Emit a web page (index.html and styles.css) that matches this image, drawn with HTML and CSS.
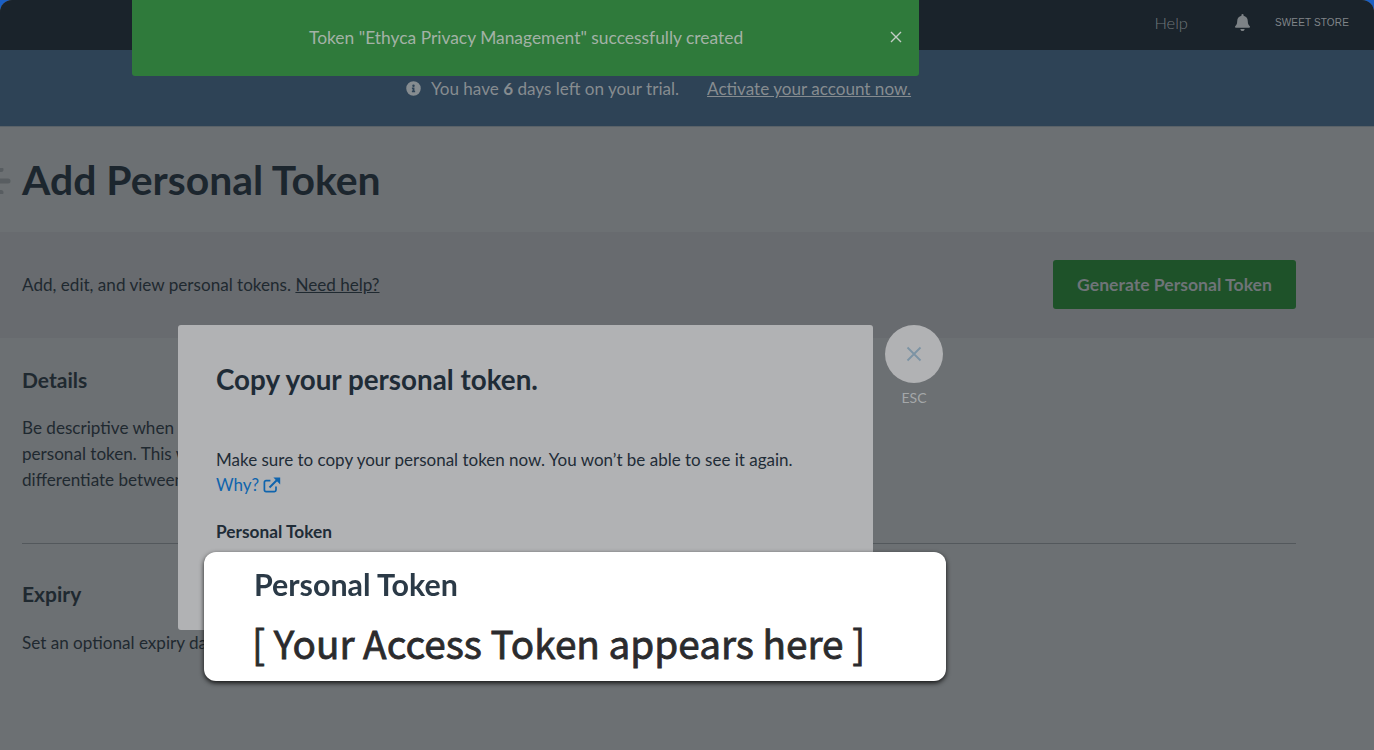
FILE: index.html
```html
<!DOCTYPE html>
<html lang="en">
<head>
    <meta charset="UTF-8">
    <meta name="viewport" content="width=device-width, initial-scale=1.0">
    <title>Add Personal Token</title>
    <link rel="stylesheet" href="styles.css">
</head>
<body>
    <div class="page">
        <header class="topbar">
            <span class="help">Help</span>
            <svg class="bell" viewBox="0 0 448 512" width="15" height="17"><path fill="currentColor" d="M224 512c35 0 64-29 64-64H160c0 35 29 64 64 64zm215-150c-19-21-56-52-56-154 0-78-54-140-127-155V32a32 32 0 1 0-64 0v21C119 68 65 130 65 208c0 102-37 133-56 154-6 6-9 14-9 22 0 16 13 32 32 32h384c19 0 32-16 32-32 0-8-3-16-9-22z"/></svg>
            <span class="store">SWEET STORE</span>
        </header>

        <div class="trial">
            <svg class="info" viewBox="0 0 512 512" width="15" height="15"><path fill="currentColor" d="M256 8a248 248 0 1 0 0 496 248 248 0 0 0 0-496zm0 110a42 42 0 1 1 0 84 42 42 0 0 1 0-84zm56 254c0 7-5 12-12 12h-88c-7 0-12-5-12-12v-24c0-7 5-12 12-12h12v-64h-12c-7 0-12-5-12-12v-24c0-7 5-12 12-12h64c7 0 12 5 12 12v100h12c7 0 12 5 12 12z"/></svg>
            <span>You have <b>6</b> days left on your trial.</span>
            <a class="activate">Activate your account now.</a>
        </div>

        <div class="title-band">
            <svg class="back-icon" viewBox="0 0 12 26" width="12" height="26"><path d="M0 13h8" stroke="currentColor" stroke-width="5" stroke-linecap="round" fill="none"/><path d="M0 1.5h1M0 24.5h1" stroke="currentColor" stroke-width="5" stroke-linecap="round" fill="none"/></svg>
            <h1>Add Personal Token</h1>
        </div>

        <div class="intro-band">
            <p>Add, edit, and view personal tokens. <a class="need-help">Need help?</a></p>
            <button class="btn-generate">Generate Personal Token</button>
        </div>

        <div class="form-area">
            <section class="form-section first">
                <h2>Details</h2>
                <p>Be descriptive when<br>personal token. This w<br>differentiate between</p>
            </section>
            <section class="form-section">
                <h2>Expiry</h2>
                <p>Set an optional expiry date</p>
            </section>
        </div>
    </div>

    <div class="toast">
        <span>Token "Ethyca Privacy Management" successfully created</span>
        <svg class="toast-close" viewBox="0 0 12 12" width="12" height="12"><path d="M1 1l10 10M11 1L1 11" stroke="currentColor" stroke-width="1.4" fill="none"/></svg>
    </div>

    <div class="modal">
        <h3>Copy your personal token.</h3>
        <p class="modal-text">Make sure to copy your personal token now. You won’t be able to see it again.</p>
        <a class="why">Why?
            <svg viewBox="0 0 18 16" width="18" height="16"><path d="M13 9.5V13a1.6 1.6 0 0 1-1.6 1.6H3A1.6 1.6 0 0 1 1.4 13V5.2A1.6 1.6 0 0 1 3 3.6h4.4" stroke="currentColor" stroke-width="1.7" fill="none"/><path d="M6.5 10.5L14 3" stroke="currentColor" stroke-width="1.9" fill="none"/><path d="M10.4 0.6h6.8v6.8z" fill="currentColor"/></svg>
        </a>
        <h4>Personal Token</h4>
    </div>

    <div class="modal-close">
        <span class="close-circle">
            <svg viewBox="0 0 16 16" width="16" height="16"><path d="M1.5 1.5l13 13M14.5 1.5l-13 13" stroke="currentColor" stroke-width="1.8" fill="none"/></svg>
        </span>
        <span class="esc">ESC</span>
    </div>

    <div class="callout">
        <div class="callout-label">Personal Token</div>
        <div class="callout-token">[ Your Access Token appears here ]</div>
    </div>
</body>
</html>
```

FILE: styles.css
```css
html, body {
    height: 100%;
}

body {
    font-family: 'Lato', sans-serif;
    margin: 0;
    background-color: #1a5fc4;
    color: #1f2930;
    overflow: hidden;
    position: relative;
}

.page {
    height: 750px;
    display: flex;
    flex-direction: column;
    background-color: #6c7073;
    border-radius: 12px 12px 0 0;
    overflow: hidden;
}

.topbar {
    height: 50px;
    flex: none;
    display: flex;
    justify-content: flex-end;
    align-items: center;
    background-color: #1a232b;
    color: #6f7579;
    padding: 0 25px 5px 0;
    box-sizing: border-box;
}

.help {
    font-size: 16.5px;
    font-weight: 300;
    margin-right: 47px;
}

.bell {
    margin-right: 25px;
    color: #7d8286;
}

.store {
    font-family: 'Liberation Sans', sans-serif;
    font-size: 10px;
    letter-spacing: 0.15px;
    color: #808589;
}

.trial {
    height: 77px;
    flex: none;
    display: flex;
    justify-content: center;
    align-items: center;
    box-sizing: border-box;
    padding: 0 57px 0 0;
    background-color: #2e4356;
    color: #868c90;
    font-size: 17.1px;
    border-bottom: 1px solid #5a6268;
}

.info {
    margin-right: 10px;
}

.activate {
    margin-left: 28px;
    text-decoration: underline;
}

.title-band {
    height: 105px;
    flex: none;
    display: flex;
    align-items: center;
    padding-left: 22px;
    position: relative;
    background-color: #6c7073;
}

.back-icon {
    position: absolute;
    left: 0;
    top: 41px;
    color: #585d61;
}

h1 {
    margin: 0;
    font-size: 40.9px;
    font-weight: 700;
    color: #1c262e;
}

.intro-band {
    height: 106px;
    flex: none;
    display: flex;
    justify-content: space-between;
    align-items: center;
    padding: 0 78px 2px 22px;
    box-sizing: border-box;
    background-color: #686b6f;
    font-size: 17.1px;
}

.intro-band p {
    margin: 0;
}

.need-help {
    text-decoration: underline;
}

.btn-generate {
    width: 243px;
    height: 49px;
    border: none;
    border-radius: 3px;
    background-color: #1e5229;
    color: #6f7478;
    font-family: 'Lato', sans-serif;
    font-size: 17.6px;
    font-weight: 700;
}

.form-area {
    flex: 1;
    padding: 0 78px 0 22px;
    background-color: #6c7073;
}

.form-section {
    font-size: 17.1px;
    line-height: 26px;
}

.form-section.first {
    padding: 27px 0 50px;
    border-bottom: 1px solid #53585c;
}

.form-section h2 {
    margin: 0;
    font-size: 21px;
    font-weight: 700;
    line-height: 30px;
}

.form-section p {
    margin: 20px 0 0;
}

.form-section:not(.first) {
    padding-top: 35px;
}

.form-section:not(.first) p {
    margin-top: 21px;
}

.toast {
    position: absolute;
    left: 132px;
    top: 0;
    width: 787px;
    height: 76px;
    box-sizing: border-box;
    padding: 0 17px 2px 177px;
    display: flex;
    justify-content: space-between;
    align-items: center;
    background-color: #2f7a3b;
    border-radius: 0 0 3px 3px;
    color: #a3b2a6;
    font-size: 17.4px;
}

.toast-close {
    color: #c3cdc5;
}

.modal {
    position: absolute;
    left: 178px;
    top: 325px;
    width: 695px;
    height: 305px;
    box-sizing: border-box;
    padding: 38px 38px;
    background-color: #b1b2b4;
    border-radius: 3px;
    color: #1f2c37;
}

.modal h3 {
    margin: 0;
    font-size: 27.8px;
    line-height: 34px;
    font-weight: 700;
}

.modal-text {
    margin: 50px 0 0;
    font-size: 17px;
    line-height: 25px;
}

.why {
    display: flex;
    align-items: center;
    gap: 4px;
    font-size: 17px;
    line-height: 25px;
    color: #0f64ad;
}

.modal h4 {
    margin: 22px 0 0;
    font-size: 17.3px;
    line-height: 25px;
    font-weight: 700;
}

.modal-close {
    position: absolute;
    left: 885px;
    top: 325px;
    width: 58px;
    display: flex;
    flex-direction: column;
    align-items: center;
    gap: 6px;
}

.close-circle {
    width: 58px;
    height: 58px;
    border-radius: 50%;
    display: flex;
    justify-content: center;
    align-items: center;
    background-color: #b1b2b4;
    color: #7c93a4;
}

.esc {
    font-size: 14px;
    line-height: 17px;
    color: #a4a7a9;
}

.callout {
    position: absolute;
    left: 204px;
    top: 552px;
    width: 742px;
    height: 129px;
    box-sizing: border-box;
    padding: 14px 50px;
    background-color: #fff;
    border-radius: 12px;
    box-shadow: 0 2px 5px rgba(0, 0, 0, 0.85);
}

.callout-label {
    font-size: 30.4px;
    line-height: 36px;
    font-weight: 700;
    color: #2b3a47;
    filter: blur(0.6px);
}

.callout-token {
    margin: 15px 0 0 -2px;
    font-family: 'Noto Sans CJK JP', 'Noto Sans', sans-serif;
    font-size: 38.7px;
    line-height: 50px;
    font-weight: 400;
    -webkit-text-stroke: 0.8px #2b2b2d;
    color: #2b2b2d;
    white-space: nowrap;
}
```
